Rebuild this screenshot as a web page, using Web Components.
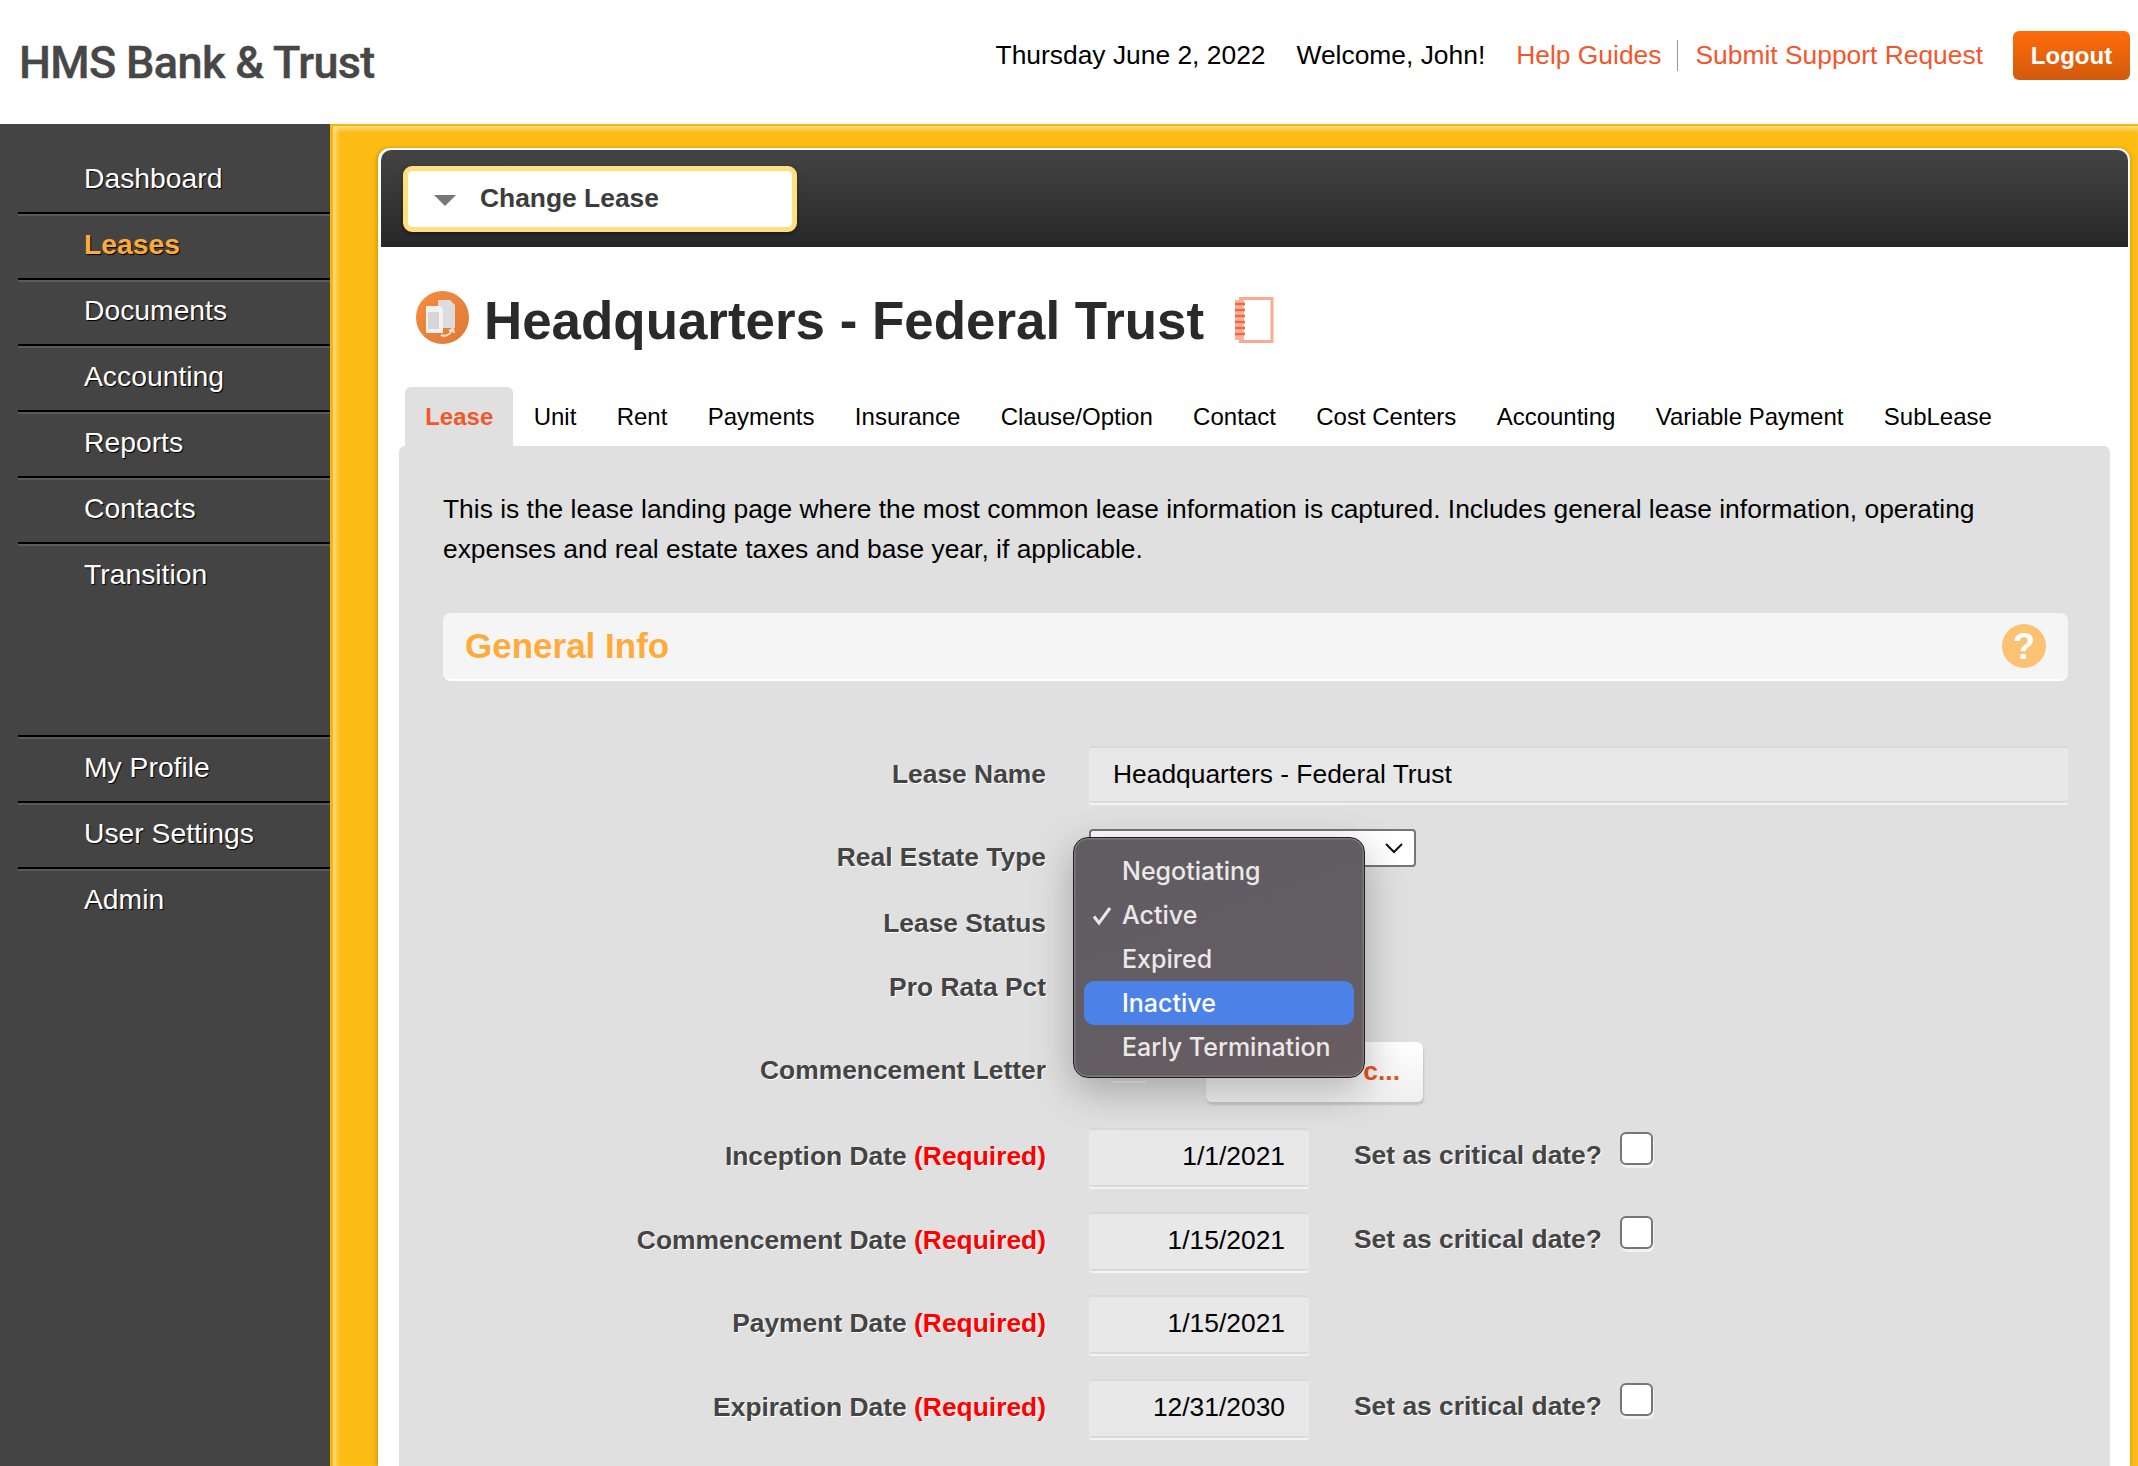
<!DOCTYPE html>
<html>
<head>
<meta charset="utf-8">
<title>HMS Bank & Trust</title>
<style>
  html, body { margin: 0; height: 100%; }
  body { overflow: hidden; font-family: "Liberation Sans", Arial, sans-serif; background: #fff; }
</style>
</head>
<body>
<lease-app></lease-app>

<script>
class AppHeader extends HTMLElement {
    constructor() {
        super();
        this.attachShadow({ mode: 'open' });
        this.shadowRoot.innerHTML = `
        <style>
            :host { display: flex; align-items: flex-start; justify-content: space-between; height: 124px; background: #fff; }
            .logo { font: 500 45px/1 Roboto, sans-serif; color: #474747; margin: 40px 0 0 19px; letter-spacing: -.65px; -webkit-text-stroke: .4px #474747; }
            .right { display: flex; align-items: center; height: 49px; margin: 31px 8px 0 0; font-size: 26.4px; color: #000; }
            .date { margin-right: 31px; }
            a { color: #f4562b; text-decoration: none; }
            .help { padding-right: 16px; border-right: 1px solid #999; line-height: 31px; }
            .support { padding-left: 17px; margin-right: 30px; }
            .logout { width: 117px; height: 49px; display: flex; align-items: center; justify-content: center; border-radius: 6px;
                background: linear-gradient(#ff6c0a, #d25a0c); color: #fff; font-weight: bold; font-size: 24px; box-sizing: border-box; }
        </style>
        <div class="logo">HMS Bank &amp; Trust</div>
        <div class="right">
            <span class="date">Thursday June 2, 2022</span>
            <span class="date">Welcome, John!</span>
            <a class="help">Help Guides</a>
            <a class="support">Submit Support Request</a>
            <div class="logout">Logout</div>
        </div>`;
    }
}
customElements.define('app-header', AppHeader);

class SideNav extends HTMLElement {
    constructor() {
        super();
        this.attachShadow({ mode: 'open' });
        this.shadowRoot.innerHTML = `
        <style>
            :host { display: block; width: 330px; flex: none; background: #444; box-sizing: border-box; padding: 22px 0 0 18px; }
        </style>
        <slot></slot>`;
    }
}
customElements.define('side-nav', SideNav);

class NavItem extends HTMLElement {
    constructor() {
        super();
        this.attachShadow({ mode: 'open' });
        this.shadowRoot.innerHTML = `
        <style>
            :host { display: block; height: 66px; box-sizing: border-box; padding: 16px 0 0 66px; position: relative;
                font-size: 28.3px; line-height: 32px; color: #fff; text-shadow: 1px 1px 1px #000; }
            :host::before { content: ""; position: absolute; left: 0; right: 0; top: 0; height: 2px; background: #000; border-bottom: 2px solid #5a5a5a; }
            :host([first])::before { display: none; }
            :host([active]) { color: #ffab3b; font-weight: bold; }
            :host([tall]) { height: 193px; }
        </style>
        <slot></slot>`;
    }
}
customElements.define('nav-item', NavItem);

class LeaseTabs extends HTMLElement {
    constructor() {
        super();
        this.attachShadow({ mode: 'open' });
        const active = 'Lease';
        const names = ['Lease', 'Unit', 'Rent', 'Payments', 'Insurance', 'Clause/Option', 'Contact', 'Cost Centers', 'Accounting', 'Variable Payment', 'SubLease'];
        this.shadowRoot.innerHTML = `
        <style>
            :host { display: flex; height: 59px; padding-left: 24px; font-size: 24px; color: #000; }
            div { padding: 16px 20.2px 0; box-sizing: border-box; line-height: 28px; }
            .on { background: #e0e0e0; color: #f4562b; font-weight: bold; border-radius: 6px 6px 0 0; }
        </style>
        ${names.map(n => `<div class="${n === active ? 'on' : ''}">${n}</div>`).join('')}`;
    }
}
customElements.define('lease-tabs', LeaseTabs);

class FormRow extends HTMLElement {
    constructor() {
        super();
        this.attachShadow({ mode: 'open' });
        this.shadowRoot.innerHTML = `
        <style>
            :host { display: grid; grid-template-columns: 603px 1fr; column-gap: 43px; align-items: start; }
            .label { text-align: right; padding-top: 8px; font-size: 26.4px; font-weight: bold; line-height: 40px; color: #444; text-shadow: 1px 1px 0 #fff; }
            .field { display: flex; align-items: flex-start; position: relative; }
        </style>
        <div class="label"><slot name="label"></slot></div>
        <div class="field"><slot></slot></div>`;
    }
    connectedCallback() {
        this.style.height = this.getAttribute('pitch') + 'px';
    }
}
customElements.define('form-row', FormRow);

class TextBox extends HTMLElement {
    constructor() {
        super();
        this.attachShadow({ mode: 'open' });
        this.shadowRoot.innerHTML = `
        <style>
            :host { display: block; flex: none; box-sizing: border-box; height: 59px; padding: 0 24px; font-size: 26.4px; line-height: 53px; color: #000;
                background: #e8e8e8; border-top: 2px solid #d9d9d9; border-bottom: 2px solid #d9d9d9; box-shadow: 0 2px 0 #f4f4f4; border-radius: 3px; }
            :host([wide]) { width: 100%; height: 57px; }
            :host([date]) { width: 220px; text-align: right; padding-right: 24px; }
        </style>
        <slot></slot>`;
    }
}
customElements.define('text-box', TextBox);

class CriticalCheck extends HTMLElement {
    constructor() {
        super();
        this.attachShadow({ mode: 'open' });
        this.shadowRoot.innerHTML = `
        <style>
            :host { display: flex; align-items: flex-start; margin-left: 45px; font-size: 26.4px; font-weight: bold; line-height: 40px; color: #444; text-shadow: 1px 1px 0 #fff; }
            span { padding-top: 7px; }
            i { display: block; box-sizing: border-box; width: 33px; height: 33px; margin: 4px 0 0 18px; background: #fff; border: 2px solid #767676; border-radius: 6px; box-shadow: 1px 3px 0 #f2f2f2; }
        </style>
        <span>Set as critical date?</span><i></i>`;
    }
}
customElements.define('critical-check', CriticalCheck);

class SelectMenu extends HTMLElement {
    constructor() {
        super();
        this.attachShadow({ mode: 'open' });
        const options = ['Negotiating', 'Active', 'Expired', 'Inactive', 'Early Termination'];
        this.shadowRoot.innerHTML = `
        <style>
            :host { position: absolute; left: -16px; top: 8px; width: 292px; height: 241px; box-sizing: border-box; padding: 11px 10px; z-index: 5;
                background: linear-gradient(160deg, #615c62 0%, #625d63 65%, #6b5c60 100%); border: 1px solid #1f1f1f; border-radius: 15px;
                box-shadow: inset 0 0 0 1.5px #7d797e, 0 12px 40px rgba(0,0,0,.28);
                font: 500 25px/44px Inter, sans-serif; color: #ece8e8; }
            div { height: 44px; padding-left: 38px; position: relative; border-radius: 10px; }
            .hover { background: #4c82e8; color: #fff; }
            svg { position: absolute; left: 8px; top: 13px; }
        </style>
        ${options.map(o => `<div class="${o === 'Inactive' ? 'hover' : ''}">${o === 'Active' ? '<svg width="20" height="20" viewBox="0 0 20 20"><path d="M2 10.5l5 6.5L18 2" fill="none" stroke="#ece8e8" stroke-width="3"/></svg>' : ''}${o}</div>`).join('')}`;
    }
}
customElements.define('select-menu', SelectMenu);

class GeneralInfo extends HTMLElement {
    constructor() {
        super();
        this.attachShadow({ mode: 'open' });
        this.shadowRoot.innerHTML = `
        <style>
            :host { display: flex; align-items: center; justify-content: space-between; height: 68px; box-sizing: border-box; padding: 0 22px; background: #f5f5f5;
                border-bottom: 2px solid #fff; border-radius: 8px; font-size: 35px; font-weight: bold; color: #ffab3b; }
            .q { width: 44px; height: 44px; border-radius: 50%; background: #fbc274; color: #fff; font-size: 36px; line-height: 45px; text-align: center; }
        </style>
        <span>General Info</span><div class="q">?</div>`;
    }
}
customElements.define('general-info', GeneralInfo);

class LeaseApp extends HTMLElement {
    constructor() {
        super();
        this.attachShadow({ mode: 'open' });
        this.shadowRoot.innerHTML = `
        <style>
            :host { display: flex; flex-direction: column; height: 100vh; overflow: hidden; font-family: "Liberation Sans", Arial, sans-serif; }
            .row { display: flex; flex: 1; min-height: 0; }
            .yellow { flex: 1; min-width: 0; box-sizing: border-box; padding: 22px 8px 0 45px; background: #fcbc14; border-top: 2px solid #f8b60c; border-left: 3px solid #f8b60c;
                box-shadow: inset 3px 3px 5px rgba(255,255,255,.55); }
            .panel { height: 100%; background: #fff; border-radius: 12px 12px 0 0; box-sizing: border-box; padding: 2px 2px 0 3px; box-shadow: -2px 0 3px rgba(190,130,0,.5), 2px 0 3px rgba(190,130,0,.3); }
            .bar { height: 97px; box-sizing: border-box; padding-top: 16px; padding-left: 22px; background: linear-gradient(#444, #272727); border-radius: 10px 10px 0 0; }
            .change { display: flex; align-items: center; width: 394px; height: 66px; box-sizing: border-box; border: 5px solid #ffdf7e; border-radius: 9px; background: #fff;
                box-shadow: 0 2px 4px rgba(0,0,0,.4); font-size: 26.4px; font-weight: bold; color: #3c3c3c; padding: 0 0 2px 26px; }
            .change i { width: 0; height: 0; border: 11px solid transparent; border-top: 11px solid #777; border-bottom: 0; margin: 4px 24px 0 0; }
            .title { display: flex; align-items: center; height: 140px; padding-left: 35px; box-sizing: border-box; font-size: 52.9px; font-weight: bold; color: #2a2a2a; }
            .title h1 { font: inherit; margin: 6px 30px 0 15px; }
            .note { margin-top: 5px; }
            .gray { margin: 0 18px 0 18px; background: #e0e0e0; border-radius: 6px 6px 0 0; padding: 43px 42px 0 44px; height: 1100px; box-sizing: border-box; }
            .desc { margin: 0 0 44px; font-size: 26.4px; line-height: 40px; color: #000; }
            .rows { padding-top: 65px; }
            .req { color: #f00; }
            .sel { flex: none; width: 327px; height: 38px; box-sizing: border-box; background: #fff; border: 2px solid #767676; border-radius: 4px; position: relative; }
            .sel svg { position: absolute; right: 10px; top: 11px; }
            .stub { flex: none; width: 36px; height: 33px; margin: 6px 0 0 22px; box-shadow: 0 2px 0 #efefef; border-radius: 3px; }
            .upload { flex: none; width: 217px; height: 60px; box-sizing: border-box; margin-left: 59px; padding: 0 23px 2px 0; display: flex; align-items: center; justify-content: flex-end; border-radius: 6px;
                background: linear-gradient(#fff, #efefef); box-shadow: 1px 3px 2px #c4c4c4; font-size: 26.4px; font-weight: bold; color: #e9501e; }
        </style>
        <app-header></app-header>
        <div class="row">
            <side-nav>
                <nav-item first>Dashboard</nav-item>
                <nav-item active>Leases</nav-item>
                <nav-item>Documents</nav-item>
                <nav-item>Accounting</nav-item>
                <nav-item>Reports</nav-item>
                <nav-item>Contacts</nav-item>
                <nav-item tall>Transition</nav-item>
                <nav-item>My Profile</nav-item>
                <nav-item>User Settings</nav-item>
                <nav-item>Admin</nav-item>
            </side-nav>
            <div class="yellow">
                <div class="panel">
                    <div class="bar"><div class="change"><i></i>Change Lease</div></div>
                    <div class="title">
                        <svg width="53" height="53" viewBox="0 0 53 53">
                            <defs><linearGradient id="ic" x1="0" y1="0" x2="1" y2="1"><stop offset="0" stop-color="#f78c3c"/><stop offset="1" stop-color="#dd7a38"/></linearGradient></defs>
                            <circle cx="26.5" cy="26.5" r="26.5" fill="url(#ic)"/>
                            <path d="M22 9h12l5 5v23H22z" fill="#dcdcdc"/>
                            <path d="M10 15h14l3 3v24H10z" fill="#f2f2f2"/>
                            <path d="M12 21h11v17H12z" fill="#d6d6d6"/>
                            <path d="M25 44c4 2 9 0 11-5M33 40l4-2 1 4" fill="none" stroke="#fbe3d2" stroke-width="2"/>
                        </svg>
                        <h1>Headquarters - Federal Trust</h1>
                        <svg class="note" width="40" height="46" viewBox="0 0 40 46">
                            <path d="M6.5 1.5H38V44.5H6.5z" fill="#fff" stroke="#f9ab94" stroke-width="3"/>
                            <path d="M1 3h9v40H1z" fill="#f9b29d"/>
                            <path d="M1 7h10M1 13h10M1 19h10M1 25h10M1 31h10M1 37h10" stroke="#f4683f" stroke-width="2.4"/>
                        </svg>
                    </div>
                    <lease-tabs></lease-tabs>
                    <div class="gray">
                        <p class="desc">This is the lease landing page where the most common lease information is captured. Includes general lease information, operating expenses and real estate taxes and base year, if applicable.</p>
                        <general-info></general-info>
                        <div class="rows">
                            <form-row pitch="83"><span slot="label">Lease Name</span><text-box wide>Headquarters - Federal Trust</text-box></form-row>
                            <form-row pitch="66"><span slot="label">Real Estate Type</span>
                                <div class="sel"><svg width="20" height="12" viewBox="0 0 20 12"><path d="M2 2l8 8 8-8" fill="none" stroke="#111" stroke-width="2"/></svg></div>
                                <select-menu></select-menu>
                            </form-row>
                            <form-row pitch="64"><span slot="label">Lease Status</span></form-row>
                            <form-row pitch="83"><span slot="label">Pro Rata Pct</span></form-row>
                            <form-row pitch="86"><span slot="label">Commencement Letter</span><div class="stub"></div><div class="upload">c...</div></form-row>
                            <form-row pitch="84"><span slot="label">Inception Date <span class="req">(Required)</span></span><text-box date>1/1/2021</text-box><critical-check></critical-check></form-row>
                            <form-row pitch="83"><span slot="label">Commencement Date <span class="req">(Required)</span></span><text-box date>1/15/2021</text-box><critical-check></critical-check></form-row>
                            <form-row pitch="84"><span slot="label">Payment Date <span class="req">(Required)</span></span><text-box date>1/15/2021</text-box></form-row>
                            <form-row pitch="84"><span slot="label">Expiration Date <span class="req">(Required)</span></span><text-box date>12/31/2030</text-box><critical-check></critical-check></form-row>
                        </div>
                    </div>
                </div>
            </div>
        </div>`;
    }
}
customElements.define('lease-app', LeaseApp);
</script>
</body>
</html>
